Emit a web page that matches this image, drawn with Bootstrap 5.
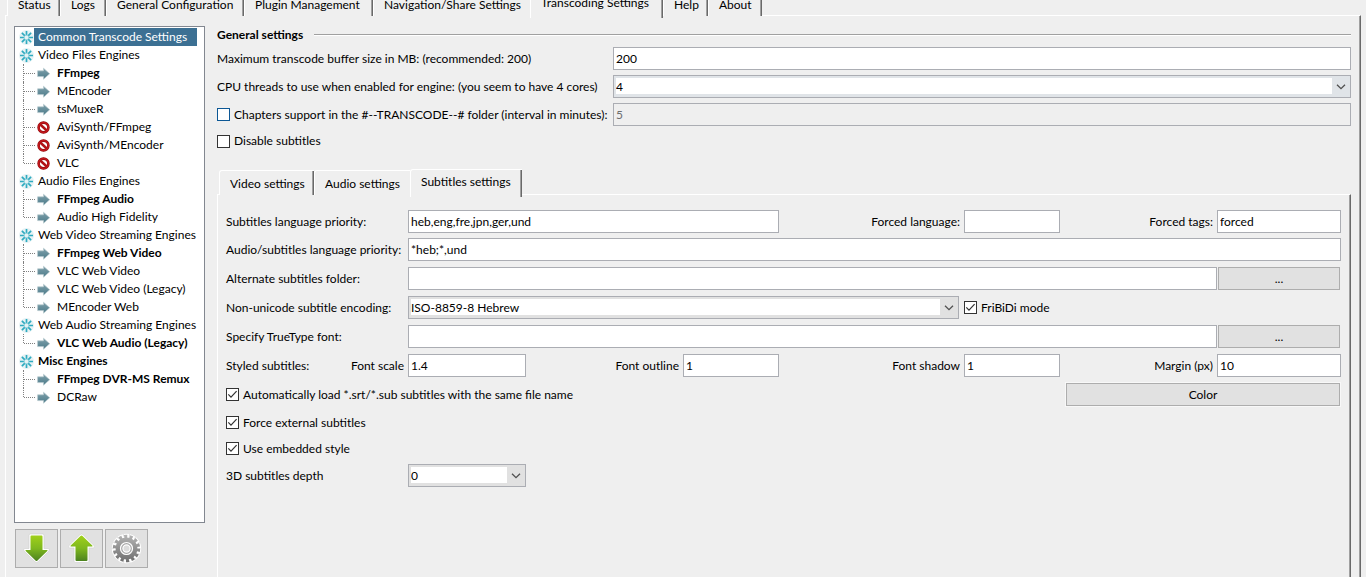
<!DOCTYPE html>
<html lang="en">
<head>
<meta charset="utf-8">
<meta name="viewport" content="width=device-width, initial-scale=1">
<title>Transcoding Settings</title>
<link href="https://cdn.jsdelivr.net/npm/bootstrap@5.3.0/dist/css/bootstrap.min.css" rel="stylesheet">
<style>
:root{--face:#efefef;--line:#abadb3;--dark:#696969;--mid:#a0a0a0}
body{font:12px/18px Lato,"Open Sans",sans-serif;color:#000;background:var(--face);overflow:hidden}
button,input,select{font:inherit;color:inherit}

/* tab strips */
.strip{padding-left:2px;position:relative;z-index:1}
.strip button{background:var(--face);border:0;border-top:1px solid #fff;border-left:1px solid #fff;border-radius:3px 0 0 0;box-shadow:inset -1px 0 var(--dark),inset -2px 0 var(--mid);height:25px;padding:2px 0 0 10px;text-align:left;line-height:18px;white-space:nowrap}
.strip button.before-active{box-shadow:none}
.strip button.active{height:28px;margin-bottom:-2px;padding-top:0;padding-bottom:4px}
.strip-main{height:16px;margin-left:5px;align-items:flex-end}
.pane{border:1px solid #fff;border-right:1px solid var(--dark);border-bottom:0;box-shadow:inset -1px 0 var(--mid)}
.pane-main{margin:-1px 5px 0}
.inner{height:27px;margin-top:18px}
.inner .t1{width:95px}
.inner .t2{width:96px}
.inner .t3{width:112px}

/* engine tree */
.side{width:191px;margin:10px 12px 9px 8px}
.tree{background:#fff;border:1px solid #828790;white-space:nowrap;padding-top:1px}
.tree ul{list-style:none;margin:0;padding:0}
.tree svg{display:block;flex:none}
.tree .sel{background:#3c7093;color:#fff;margin-left:-4px;padding:0 10px 0 4px}
.kids li{display:flex;align-items:center;height:18px;padding-left:9px;position:relative}
.kids li::before{content:"";position:absolute;left:8px;top:0;height:18px;border-left:1px dotted #808080}
.kids li:last-child::before{height:9px}
.kids li::after{content:"";order:-1;width:11px;border-top:1px dotted #808080}
.kids svg{margin:0 7px 0 2px}
.tools{gap:2px;margin-top:6px;padding-left:1px}
.tool{width:43px;height:39px;background:#e1e1e1;border:1px solid #adadad;padding:0;display:grid;place-items:center}

/* fields */
.work{margin:10px 9px 0 0;min-width:0}
.headline{height:18px;gap:11px;margin-bottom:3px}
.rule{height:2px;background:linear-gradient(var(--mid) 50%,#fff 50%)}
.line{height:23px;margin-bottom:5px}
.solo{height:18px;margin-top:1px}
.lab{width:396px;flex:none}
.fld{height:23px;width:100%;min-width:0;border:1px solid var(--line);border-radius:0;background-color:#fff;padding:0 2px;line-height:21px}
.fld:disabled{background:var(--face);color:#6d6d6d;opacity:1}
.drop{appearance:none;background:
 url("data:image/svg+xml,%3Csvg xmlns='http://www.w3.org/2000/svg' width='10' height='6'%3E%3Cpath d='M1 .7l4 4 4-4' fill='none' stroke='%23505050' stroke-width='1.3'/%3E%3C/svg%3E") right 4px center/10px 6px no-repeat,
 linear-gradient(#fff,#fff) 2px 2px/calc(100% - 20px) 16px no-repeat,#e1e1e1}
.drop.hot{background-color:#e0e4e8}
.push{height:23px;border:1px solid #adadad;background:#e1e1e1;padding:0;line-height:21px;text-align:center}
.tick{appearance:none;flex:none;width:13px;height:13px;margin:0;border:1px solid #333;background:#fff}
.tick:checked{background:#fff url("data:image/svg+xml,%3Csvg xmlns='http://www.w3.org/2000/svg' width='11' height='11'%3E%3Cpath d='M1.3 5.3l2.7 2.9 5.6-6' fill='none' stroke='%23333' stroke-width='1.2'/%3E%3C/svg%3E") center no-repeat}
.tick.hot{border-color:#0c5795}

/* subtitles pane */
.pane-sub{margin-top:-1px}
.sub-grid{display:grid;line-height:23px;padding:15px 9px 0 8px;white-space:nowrap;
 grid-template-columns:182px 118fr 157fr 96fr 185fr 96fr 157fr 124fr;
 grid-template-rows:28px repeat(5,29px) 28px 26px 27px 23px;align-items:start}
.to5{grid-column:2/5}
.to6{grid-column:2/6;padding-right:5px}
.to8{grid-column:2/8}
.to9{grid-column:2/9}
.from6{grid-column:6/9}
.first6{grid-column:1/7}
.full{grid-column:1/9}
.color{grid-column:7/9;margin:0 1px 0 6px;outline:1px solid #f8f8f8}
.browse{margin:0 1px}
.cap{text-align:right;padding-right:4px}
</style>
</head>
<body>
<svg width="0" height="0" class="position-absolute" aria-hidden="true">
<defs>
<linearGradient id="gr" x1="0" y1="0" x2="0" y2="1"><stop offset="0" stop-color="#a0d01a"/><stop offset=".5" stop-color="#7fb81e"/><stop offset="1" stop-color="#4c8220"/></linearGradient>
<linearGradient id="gy" gradientUnits="userSpaceOnUse" x1="0" y1="2" x2="0" y2="29"><stop offset="0" stop-color="#b4b4b4"/><stop offset="1" stop-color="#6e6e6e"/></linearGradient>
<linearGradient id="bl" x1="0" y1="0" x2="0" y2="1"><stop offset="0" stop-color="#7fa0ab"/><stop offset="1" stop-color="#4d7c8a"/></linearGradient>
<symbol id="star" viewBox="0 0 15 15"><circle cx="7.5" cy="7.5" r="7.4" fill="#e6f2f4"/><path d="M7.5 1v4.300M7.500 9.700V14M1 7.500h4.300M9.700 7.500H14M2.900 2.900l3 3M9.100 9.100l3 3M2.900 12.100l3-3M9.100 5.900l3-3" stroke="#2fabc0" stroke-width="1.700"/><circle cx="7.500" cy="7.500" r="2.300" fill="none" stroke="#8fd0da" stroke-width=".8"/></symbol>
<symbol id="arr" viewBox="0 0 13 13"><path d="M.6 3.800h5.900V1.200L12.700 6.700 6.500 12.200V9.600H.6z" fill="url(#bl)" stroke="#b9cacf" stroke-width=".7"/></symbol>
<symbol id="ban" viewBox="0 0 13 13"><circle cx="6.500" cy="6.500" r="4.900" fill="#fff" stroke="#8e0d10" stroke-width="2.600"/><circle cx="6.500" cy="6.500" r="4.900" fill="none" stroke="#c5161b" stroke-width="1.500"/><path d="M3.300 3.500l6.400 6" stroke="#b01216" stroke-width="2.400"/></symbol>
</defs>
</svg>
<div class="min-vh-100 d-flex flex-column">
<nav class="strip strip-main d-flex" role="tablist" id="mainTabs"></nav>
<main class="pane pane-main flex-grow-1 d-flex">
 <aside class="side d-flex flex-column flex-shrink-0">
  <div class="tree flex-grow-1" id="tree"></div>
  <div class="tools d-flex">
   <button class="tool" aria-label="Move down"><svg width="29" height="31" viewBox="0 0 29 31"><path d="M7 2.500Q7 1 8.500 1h12Q22 1 22 2.500V15.500h4q2.500 0 1 2.500L16 28.800q-1.500 1.400-3 0L2 18Q.5 15.500 3 15.500h4z" fill="#fff" stroke="#cfcfcf" stroke-width=".6"/><path d="M9.500 2.500h10q1 0 1 1V17h4.500q1 0 .3 1L15.500 27.500q-1 1-2 0L3.700 18q-.7-1 .3-1h4.500V3.500q0-1 1-1z" fill="url(#gr)"/></svg></button>
   <button class="tool" aria-label="Move up"><svg width="29" height="31" viewBox="0 0 29 31"><g transform="matrix(1 0 0 -1 0 30.500)"><path d="M7 2.500Q7 1 8.500 1h12Q22 1 22 2.500V15.500h4q2.500 0 1 2.500L16 28.800q-1.500 1.400-3 0L2 18Q.5 15.500 3 15.500h4z" fill="#fff" stroke="#cfcfcf" stroke-width=".6"/></g><path d="M9.500 28h10q1 0 1-1V13.500h4.500q1 0 .3-1L15.500 3q-1-1-2 0L3.700 12.500q-.7 1 .3 1h4.500V27q0 1 1 1z" fill="url(#gr)"/></svg></button>
   <button class="tool" aria-label="Toggle engine"><svg width="31" height="31" viewBox="0 0 31 31"><circle cx="15.500" cy="15.500" r="12.300" fill="#fff" stroke="#fff" stroke-width="4.800" stroke-dasharray="4.700 .820"/><circle cx="15.500" cy="15.500" r="12" fill="none" stroke="url(#gy)" stroke-width="3.400" stroke-dasharray="3.100 2.286"/><circle cx="15.500" cy="15.500" r="10.900" fill="url(#gy)"/><circle cx="15.500" cy="15.500" r="6" fill="#a5a5a5" stroke="#fff" stroke-width="1.200"/><circle cx="15.500" cy="15.500" r="3.600" fill="#dcdcdc" stroke="#fff" stroke-width="1.200"/></svg></button>
  </div>
 </aside>
 <section class="work flex-grow-1 d-flex flex-column">
  <div class="d-flex align-items-center headline"><b>General settings</b><div class="rule flex-grow-1"></div></div>
  <div class="d-flex align-items-center line"><label class="lab" for="buf">Maximum transcode buffer size in MB: (recommended: 200)</label><input class="fld" id="buf" value="200"></div>
  <div class="d-flex align-items-center line"><label class="lab" for="cpu">CPU threads to use when enabled for engine: (you seem to have 4 cores)</label><select class="fld drop hot" id="cpu"><option>4</option></select></div>
  <div class="d-flex align-items-center line"><label class="lab d-flex align-items-center gap-1"><input type="checkbox" class="tick hot">Chapters support in the #--TRANSCODE--# folder (interval in minutes):</label><input class="fld" aria-label="Interval in minutes" value="5" disabled></div>
  <label class="d-flex align-items-center gap-1 solo"><input type="checkbox" class="tick">Disable subtitles</label>
  <div class="strip d-flex align-items-end inner" role="tablist">
   <button role="tab" class="t1">Video settings</button><button role="tab" class="t2 before-active">Audio settings</button><button role="tab" class="t3 active" aria-selected="true">Subtitles settings</button>
  </div>
  <div class="pane pane-sub flex-grow-1">
   <div class="sub-grid">
    <label for="slp">Subtitles language priority:</label><input class="fld to5" id="slp" value="heb,eng,fre,jpn,ger,und">
    <label class="cap" for="fl">Forced language:</label><input class="fld" id="fl">
    <label class="cap" for="ft">Forced tags:</label><input class="fld" id="ft" value="forced">

    <label for="aslp">Audio/subtitles language priority:</label><input class="fld to9" id="aslp" value="*heb;*,und">

    <label for="alt">Alternate subtitles folder:</label><input class="fld to8" id="alt"><button class="push browse" aria-label="Browse folder">...</button>

    <label for="enc">Non-unicode subtitle encoding:</label><div class="to6"><select class="fld drop d-block" id="enc"><option>ISO-8859-8 Hebrew</option></select></div>
    <label class="from6 d-flex align-items-center gap-1"><input type="checkbox" class="tick" checked>FriBiDi mode</label>

    <label for="ttf">Specify TrueType font:</label><input class="fld to8" id="ttf"><button class="push browse" aria-label="Browse font">...</button>

    <div class="d-flex justify-content-between cap"><span>Styled subtitles:</span><label for="fs">Font scale</label></div><input class="fld" id="fs" value="1.4">
    <label class="cap" for="fo">Font outline</label><input class="fld" id="fo" value="1">
    <label class="cap" for="fsh">Font shadow</label><input class="fld" id="fsh" value="1">
    <label class="cap" for="mg">Margin (px)</label><input class="fld" id="mg" value="10">

    <label class="first6 d-flex align-items-center gap-1"><input type="checkbox" class="tick" checked>Automatically load *.srt/*.sub subtitles with the same file name</label><button class="push color">Color</button>
    <label class="full d-flex align-items-center gap-1"><input type="checkbox" class="tick" checked>Force external subtitles</label>
    <label class="full d-flex align-items-center gap-1"><input type="checkbox" class="tick" checked>Use embedded style</label>
    <label for="dep">3D subtitles depth</label><select class="fld drop" id="dep"><option>0</option></select>
   </div>
  </div>
 </section>
</main>
</div>
<script>
const tabs=[["Status",53],["Logs",46],["General Configuration",138],["Plugin Management",129],["Navigation/Share Settings",157],["Transcoding Settings",133],["Help",45],["About",54]];
document.getElementById('mainTabs').innerHTML=tabs.map(([t,w],i)=>`<button role="tab" class="flex-shrink-0${i==5?' active':i==4?' before-active':''}" aria-selected="${i==5}" style="width:${w}px">${t}</button>`).join('');
const ic=(n,s)=>`<svg width="${s}" height="${s}"><use href="#${n}"/></svg>`;
// engine entries: "+" marks bold (active), "x" marks unavailable
const groups=[["Common Transcode Settings",[]],["Video Files Engines",["+FFmpeg","MEncoder","tsMuxeR","xAviSynth/FFmpeg","xAviSynth/MEncoder","xVLC"]],["Audio Files Engines",["+FFmpeg Audio","Audio High Fidelity"]],["Web Video Streaming Engines",["+FFmpeg Web Video","VLC Web Video","VLC Web Video (Legacy)","MEncoder Web"]],["Web Audio Streaming Engines",["+VLC Web Audio (Legacy)"]],["+Misc Engines",["+FFmpeg DVR-MS Remux","DCRaw"]]];
const name=s=>s[0]=='+'?`<b>${s.slice(1)}</b>`:`<span>${s.replace(/^x/,'')}</span>`;
document.getElementById('tree').innerHTML='<ul>'+groups.map(([g,k],i)=>`<li><div class="d-flex align-items-center gap-1 ps-1">${ic('star',15)}${i?name(g):`<span class="sel">${g}</span>`}</div>${k.length?`<ul class="kids">${k.map(e=>`<li>${ic(e[0]=='x'?'ban':'arr',13)}${name(e)}</li>`).join('')}</ul>`:''}</li>`).join('')+'</ul>';
</script>
<script src="https://cdn.jsdelivr.net/npm/bootstrap@5.3.0/dist/js/bootstrap.bundle.min.js"></script>
</body>
</html>
